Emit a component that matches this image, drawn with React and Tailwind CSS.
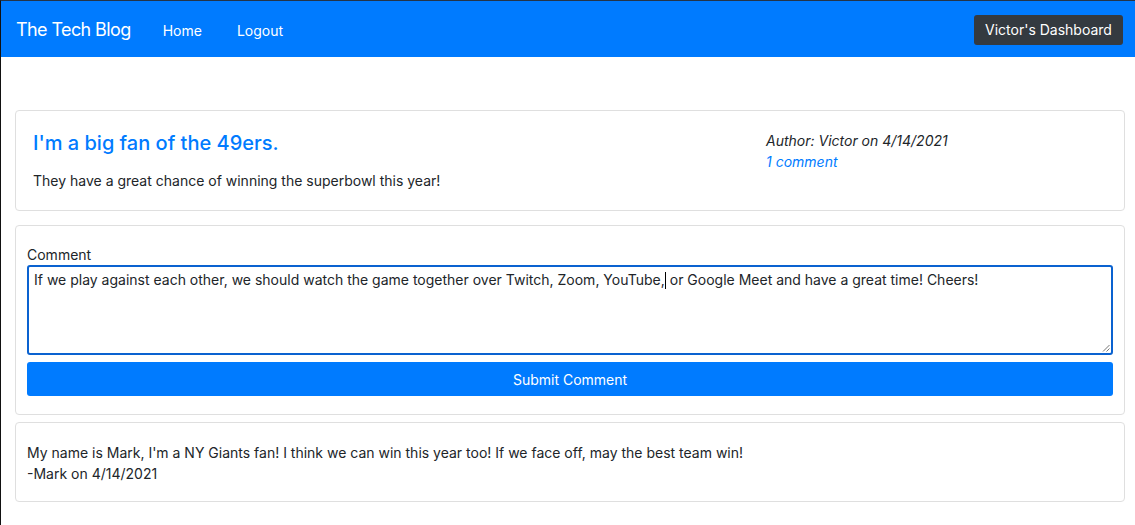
export default function App() {
  return (
    <div className="min-h-[525px] bg-white border-l border-t border-l-[#111] border-t-[#243447] font-['Inter',sans-serif] text-[#212529]">
      {/* Navbar */}
      <nav className="h-[56px] bg-[#007bff] flex items-center pl-[15px] pr-[12px]">
        <a className="text-[18px] tracking-[-0.6px] text-white leading-none mt-[2px]">The Tech Blog</a>
        <div className="flex items-center ml-[32px] gap-[35px] mt-[2px]">
          <a className="text-[14px] text-white">Home</a>
          <a className="text-[14px] text-white">Logout</a>
        </div>
        <div className="flex-1" />
        <button className="h-[30px] w-[149px] rounded-[3px] bg-[#343a40] text-white text-[14px] mt-[1px]">
          Victor's Dashboard
        </button>
      </nav>

      <div className="pl-[14px] pr-[10px] pt-[53px] pb-[23px] flex flex-col">
        {/* Post */}
        <div className="border border-[#dfdfdf] rounded-[4px] h-[101px] flex pl-[17px] pt-[17px]">
          <div className="w-[733px]">
            <h2 className="text-[20px] font-medium text-[#007bff] leading-[30px]">
              I'm a big fan of the 49ers.
            </h2>
            <p className="text-[14px] mt-[12px] leading-[22px]">
              They have a great chance of winning the superbowl this year!
            </p>
          </div>
          <div className="text-[14px] italic leading-[21px] pt-[2px]">
            <div>Author: Victor on 4/14/2021</div>
            <a className="text-[#007bff]">1 comment</a>
          </div>
        </div>

        {/* Comment form */}
        <div className="mt-[14px] border border-[#dfdfdf] rounded-[4px] px-[11px] pt-[19px] pb-[18px]">
          <label className="block text-[14px] leading-[20px]">Comment</label>
          <div className="relative h-[90px] border-2 border-[#0a62d0] rounded-[3px] px-[5px] pt-[2px] text-[14px] leading-[22px]">
            If we play against each other, we should watch the game together over Twitch, Zoom, YouTube,
            <span className="inline-block w-px h-[17px] bg-black align-[-4px]" />
            {" "}or Google Meet and have a great time! Cheers!
            <svg className="absolute right-[1px] bottom-[1px]" width="8" height="8" viewBox="0 0 8 8">
              <path d="M7.5 1 L1 7.5 M7.5 4.5 L4.5 7.5" stroke="#777" strokeWidth="1" />
            </svg>
          </div>
          <button className="mt-[7px] w-full h-[34px] rounded-[3px] bg-[#007bff] text-white text-[14px]">
            Submit Comment
          </button>
        </div>

        {/* Comments */}
        <div className="mt-[7px] border border-[#dfdfdf] rounded-[4px] h-[80px] px-[11px] pt-[19px] text-[14px] leading-[21px]">
          <p>My name is Mark, I'm a NY Giants fan! I think we can win this year too! If we face off, may the best team win!</p>
          <p>-Mark on 4/14/2021</p>
        </div>
      </div>
    </div>
  );
}
